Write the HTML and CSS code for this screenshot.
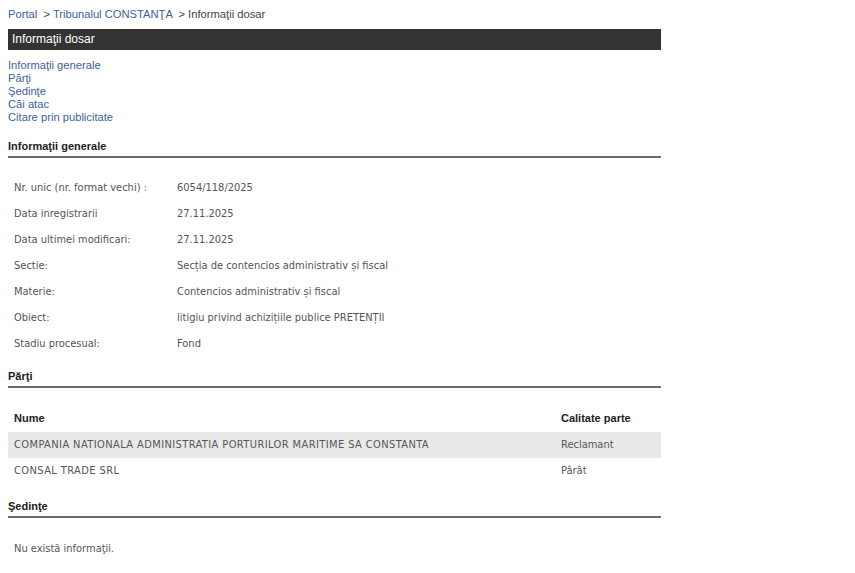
FILE: index.html
```html
<!DOCTYPE html>
<html lang="ro">
<head>
<meta charset="utf-8">
<title>Informaţii dosar</title>
<link rel="stylesheet" href="styles.css">
</head>
<body>
<div class="page">
  <div class="crumbs"><a href="#">Portal</a> &nbsp;&gt; <a href="#">Tribunalul CONSTANŢA</a> &nbsp;&gt; Informaţii dosar</div>
  <div class="titlebar">Informaţii dosar</div>
  <ul class="nav">
    <li><a href="#">Informaţii generale</a></li>
    <li><a href="#">Părţi</a></li>
    <li><a href="#">Şedinţe</a></li>
    <li><a href="#">Căi atac</a></li>
    <li><a href="#">Citare prin publicitate</a></li>
  </ul>

  <h2 class="section">Informaţii generale</h2>
  <div class="info">
    <div class="lbl">Nr. unic (nr. format vechi) :</div><div class="val">6054/118/2025</div>
    <div class="lbl">Data inregistrarii</div><div class="val">27.11.2025</div>
    <div class="lbl">Data ultimei modificari:</div><div class="val">27.11.2025</div>
    <div class="lbl">Sectie:</div><div class="val">Secția de contencios administrativ și fiscal</div>
    <div class="lbl">Materie:</div><div class="val">Contencios administrativ și fiscal</div>
    <div class="lbl">Obiect:</div><div class="val">litigiu privind achizițiile publice PRETENȚII</div>
    <div class="lbl">Stadiu procesual:</div><div class="val">Fond</div>
  </div>

  <h2 class="section section-parti">Părţi</h2>
  <div class="parties">
    <div class="prow phead"><div class="pname">Nume</div><div class="prole">Calitate parte</div></div>
    <div class="prow alt"><div class="pname caps">COMPANIA NATIONALA ADMINISTRATIA PORTURILOR MARITIME SA CONSTANTA</div><div class="prole">Reclamant</div></div>
    <div class="prow"><div class="pname caps">CONSAL TRADE SRL</div><div class="prole">Pârât</div></div>
  </div>

  <h2 class="section section-sed">Şedinţe</h2>
  <p class="empty">Nu există informaţii.</p>
</div>
</body>
</html>
```
FILE: styles.css
```css
html, body {
  margin: 0;
  padding: 0;
  background: #fff;
}
body {
  padding: 8px;
  font-family: "Liberation Sans", Arial, sans-serif;
  font-size: 12px;
  color: #333;
}
.page {
  width: 653px;
}
a {
  color: #3c5f9c;
  text-decoration: none;
}
.crumbs {
  font-size: 11.2px;
  line-height: 12px;
  color: #444;
}
.titlebar {
  margin-top: 9px;
  height: 21px;
  line-height: 21px;
  background: #333;
  color: #fff;
  font-size: 12px;
  padding: 0 4px;
}
.nav {
  list-style: none;
  margin: 9px 0 0;
  padding: 0;
  font-size: 11.2px;
  line-height: 13px;
}
.section {
  margin: 15px 0 0;
  font-size: 11px;
  font-weight: bold;
  color: #222;
  line-height: 14px;
  padding-bottom: 3px;
  border-bottom: 2px solid #6a6a6a;
}
.info {
  display: grid;
  grid-template-columns: 169px 1fr;
  margin-top: 17px;
  font-family: "DejaVu Sans Condensed", "DejaVu Sans", sans-serif;
  font-size: 11px;
  color: #555;
}
.lbl, .val {
  line-height: 26px;
}
.lbl {
  padding-left: 6px;
}
.section-parti {
  margin-top: 12px;
}
.parties {
  margin-top: 17px;
  font-family: "DejaVu Sans Condensed", "DejaVu Sans", sans-serif;
  font-size: 11px;
  color: #555;
}
.prow {
  display: flex;
  line-height: 26px;
}
.pname {
  flex: 1;
  padding-left: 6px;
}
.caps {
  letter-spacing: 0.4px;
}
.prole {
  width: 100px;
}
.phead {
  font-family: "Liberation Sans", Arial, sans-serif;
  font-weight: bold;
  font-size: 11px;
  color: #222;
  line-height: 27px;
}
.alt {
  background: #e9e9e9;
}
.section-sed {
  margin-top: 15px;
}
.empty {
  margin: 18px 0 0;
  padding-left: 6px;
  font-family: "DejaVu Sans Condensed", "DejaVu Sans", sans-serif;
  font-size: 11px;
  color: #555;
  line-height: 26px;
}
```
